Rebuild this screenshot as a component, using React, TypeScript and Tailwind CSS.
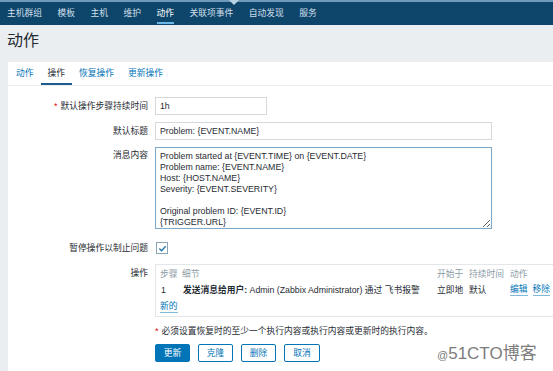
import React from "react";

const navItems = ["主机群组", "模板", "主机", "维护", "动作", "关联项事件", "自动发现", "服务"];
const tabs = ["动作", "操作", "恢复操作", "更新操作"];

const message = `Problem started at {EVENT.TIME} on {EVENT.DATE}
Problem name: {EVENT.NAME}
Host: {HOST.NAME}
Severity: {EVENT.SEVERITY}

Original problem ID: {EVENT.ID}
{TRIGGER.URL}`;

function Label({ children, required }: { children: React.ReactNode; required?: boolean }) {
  return (
    <div className="w-[140px] shrink-0 text-right text-[#1f2c33]">
      {required && <span className="mr-[3px] text-[#dc0000]">*</span>}
      {children}
    </div>
  );
}

export default function App() {
  return (
    <div className="relative h-[371px] w-[553px] overflow-hidden bg-[#ebeef0] font-['Liberation_Sans','Noto_Sans_CJK_SC',sans-serif] text-[8.75px] leading-[11px]">
      {/* top nav */}
      <div className="relative flex h-[25px] items-center gap-[15.5px] border-t-2 border-[#6f9bbb] bg-[#0e466b] pl-[7px] text-[#cfdfe9]">
        {navItems.map((item) => (
          <span
            key={item}
            className={
              item === "动作"
                ? "relative text-white after:absolute after:left-0 after:right-0 after:top-[14px] after:h-[2px] after:bg-[#6cb6e6]"
                : ""
            }
          >
            {item}
          </span>
        ))}
        <span className="absolute left-[229px] top-[-2px] h-0 w-0 border-x-[5px] border-t-[5px] border-x-transparent border-t-[#b9d2e2]" />
      </div>

      {/* title */}
      <div className="h-[37px] pl-[7px] pt-[7px] text-[16px] leading-[18px] text-[#1f2c33]">动作</div>

      {/* card */}
      <div className="ml-[8px] h-[309px] bg-white">
        <div className="flex h-[24px] border-b border-[#ebeef0] pl-[1px]">
          {tabs.map((t) => (
            <span
              key={t}
              className={
                t === "操作"
                  ? "border-b-2 border-[#1b5e8f] px-[7px] pt-[6px] text-[#1f2c33]"
                  : "px-[7px] pt-[6px] text-[#0275b8]"
              }
            >
              {t}
            </span>
          ))}
        </div>

        <div className="pt-[11px]">
          <div className="flex items-center gap-[7px]">
            <Label required>默认操作步骤持续时间</Label>
            <div className="h-[18px] w-[112px] border border-[#d6d9db] px-[4px] leading-[16px] text-[#1f2c33]">1h</div>
          </div>

          <div className="mt-[7px] flex items-center gap-[7px]">
            <Label>默认标题</Label>
            <div className="h-[18px] w-[337px] border border-[#d6d9db] px-[4px] leading-[16px] text-[#1f2c33]">
              Problem: {"{EVENT.NAME}"}
            </div>
          </div>

          <div className="mt-[7px] flex items-start gap-[7px]">
            <div className="pt-[3px]">
              <Label>消息内容</Label>
            </div>
            <textarea
              readOnly
              defaultValue={message}
              className="h-[82px] w-[337px] resize border border-[#7ea9cc] px-[4px] pt-[3px] text-[8.8px] leading-[11px] text-[#1f2c33] outline-none"
            />
          </div>

          <div className="mt-[12px] flex h-[14px] items-center gap-[7px]">
            <Label>暂停操作以制止问题</Label>
            <div className="ml-[1px] flex h-[12px] w-[12px] items-center justify-center border border-[#8ba4b6] bg-white">
              <svg viewBox="0 0 10 10" className="h-[9px] w-[9px]">
                <path d="M1.5 5 L4 7.5 L8.5 2.5" fill="none" stroke="#1f6ea6" strokeWidth="1.4" />
              </svg>
            </div>
          </div>

          <div className="mt-[9px] flex items-start gap-[7px]">
            <div className="pt-[4px]">
              <Label>操作</Label>
            </div>
            <div className="h-[53px] flex-1 border border-r-0 border-[#e3e7ea] pl-[4px] pt-[1px]">
              <div className="flex h-[16px] items-center text-[#8d9ca6]">
                <span className="w-[22px]">步骤</span>
                <span className="w-[255px]">细节</span>
                <span className="w-[32px]">开始于</span>
                <span className="w-[41px]">持续时间</span>
                <span>动作</span>
              </div>
              <div className="flex h-[16px] items-center text-[#1f2c33]">
                <span className="w-[23px] pl-[1px]">1</span>
                <span className="w-[254px] whitespace-nowrap">
                  <b>发送消息给用户:</b> Admin (Zabbix Administrator) 通过 飞书报警
                </span>
                <span className="w-[32px]">立即地</span>
                <span className="w-[41px]">默认</span>
                <span className="flex gap-[5px] text-[#0275b8]">
                  <span className="border-b border-[#0275b8]/50">编辑</span>
                  <span className="border-b border-[#0275b8]/50">移除</span>
                </span>
              </div>
              <div className="mt-[1px] flex h-[16px] items-center text-[#0275b8]">
                <span className="border-b border-[#0275b8]/50">新的</span>
              </div>
            </div>
          </div>

          <div className="ml-[147px] mt-[8px] h-[12px] leading-[12px] text-[#1f2c33]">
            <span className="mr-[3px] text-[#dc0000]">*</span>
            必须设置恢复时的至少一个执行内容或执行内容或更新时的执行内容。
          </div>

          <div className="ml-[147px] mt-[7px] flex gap-[8px]">
            <button className="h-[18px] w-[35px] rounded-[2px] border border-[#0275b8] bg-[#0275b8] text-white">更新</button>
            <button className="h-[18px] w-[35px] rounded-[2px] border border-[#0275b8] bg-white text-[#0275b8]">克隆</button>
            <button className="h-[18px] w-[35px] rounded-[2px] border border-[#0275b8] bg-white text-[#0275b8]">删除</button>
            <button className="h-[18px] w-[36px] rounded-[2px] border border-[#0275b8] bg-white text-[#0275b8]">取消</button>
          </div>
        </div>
      </div>

      {/* watermark */}
      <div className="absolute left-[437px] top-[344px] flex items-baseline text-[17px] leading-[20px] text-[#7c7c7c] [text-shadow:0_0_2px_#fff]">
        <span className="text-[11px]">@</span>
        <span>51CTO博客</span>
      </div>
    </div>
  );
}
